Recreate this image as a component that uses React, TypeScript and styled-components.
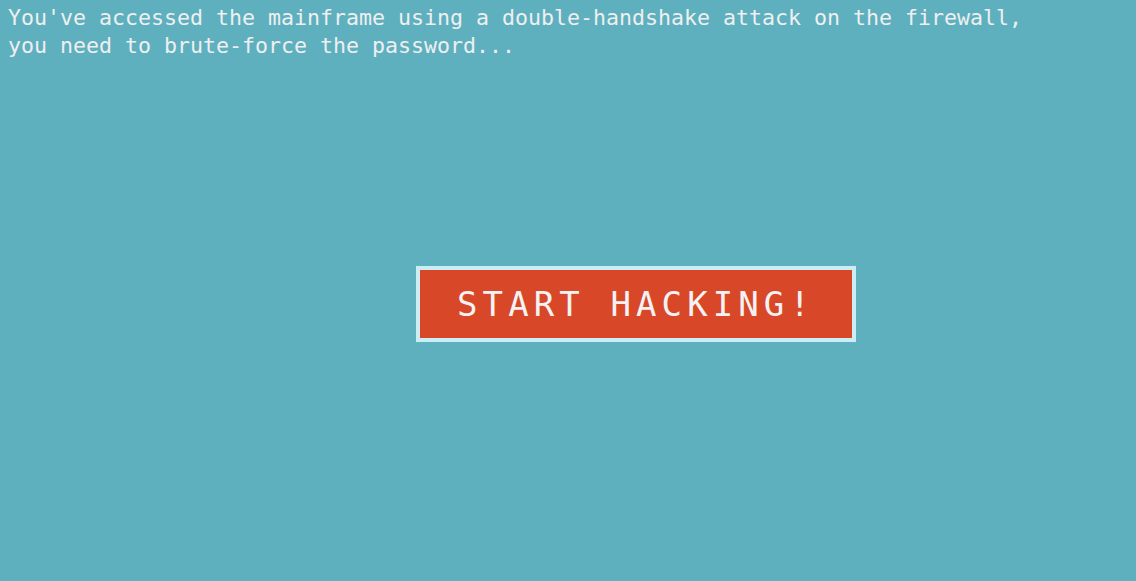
import React from 'react';
import styled, { createGlobalStyle } from 'styled-components';

const GlobalStyle = createGlobalStyle`
  html, body {
    margin: 0;
    padding: 0;
    background: #5eb0bf;
  }
  body {
    font-family: "DejaVu Sans Mono", "Liberation Mono", monospace;
    color: #efefef;
  }
`;

const Screen = styled.div`
  display: flex;
  flex-direction: column;
  min-height: 581px;
  padding: 4px 8px;
  box-sizing: border-box;
  background: #5eb0bf;
`;

const Intro = styled.p`
  margin: 0;
  font-size: 21.6px;
  line-height: 28px;
  white-space: pre-line;
`;

const ButtonRow = styled.div`
  display: flex;
  margin-top: 206px;
  padding-left: 408px;
`;

const HackButton = styled.button`
  width: 440px;
  height: 76px;
  box-sizing: border-box;
  border: 4px solid #c9eef4;
  background: #d84828;
  color: #f2f2f2;
  font-family: "DejaVu Sans Mono", "Liberation Mono", monospace;
  font-size: 34px;
  letter-spacing: 5.1px;
  padding: 0;
  cursor: pointer;
  display: flex;
  align-items: center;
  justify-content: center;

  &:hover {
    background: #e0522f;
  }
`;

export default function App() {
  return (
    <>
      <GlobalStyle />
      <Screen>
        <Intro>
          {"You've accessed the mainframe using a double-handshake attack on the firewall,\nyou need to brute-force the password..."}
        </Intro>
        <ButtonRow>
          <HackButton>START HACKING!</HackButton>
        </ButtonRow>
      </Screen>
    </>
  );
}
